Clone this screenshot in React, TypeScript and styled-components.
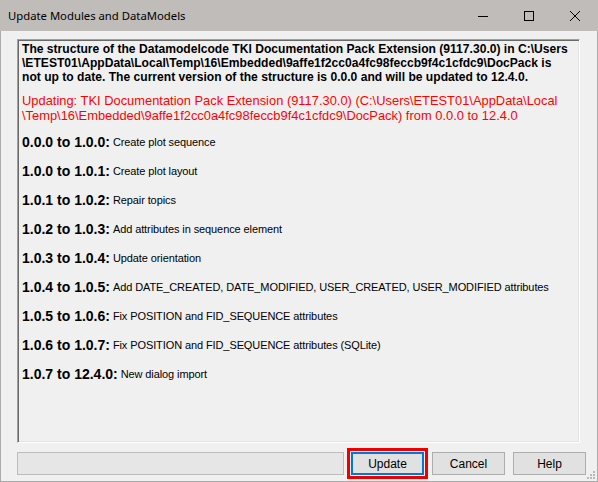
import React from "react";
import styled, { createGlobalStyle } from "styled-components";

const Global = createGlobalStyle`
  html, body { margin: 0; padding: 0; background: #f0f0f0; }
  #root { width: 598px; height: 482px; }
`;

const Window = styled.div`
  box-sizing: border-box;
  width: 598px;
  height: 482px;
  display: flex;
  flex-direction: column;
  background: #f0f0f0;
  border: 1px solid #aaaaaa;
  border-top: none;
  font-family: "Liberation Sans", Arial, sans-serif;
  color: #000;
  position: relative;
`;

const TitleBar = styled.div`
  height: 31px;
  flex: none;
  display: flex;
  align-items: center;
  background: #bfbcb9;
  margin: 0 -1px;
`;

const Title = styled.div`
  flex: 1;
  padding-left: 8px;
  font-family: "Noto Sans", "Liberation Sans", sans-serif;
  font-size: 11.3px;
  color: #000;
`;

const CtrlButton = styled.div`
  width: 46px;
  height: 31px;
  display: flex;
  align-items: center;
  justify-content: center;
`;

const Body = styled.div`
  flex: 1;
  display: flex;
  flex-direction: column;
  padding: 8px 11px 0 16px;
`;

const Panel = styled.div`
  box-sizing: border-box;
  width: 563px;
  height: 404px;
  flex: none;
  border-top: 1px solid #a0a0a0;
  border-left: 1px solid #a0a0a0;
  border-right: 1px solid #ffffff;
  border-bottom: 1px solid #ffffff;
  box-shadow: inset 1px 1px 0 #696969, inset -1px -1px 0 #e3e3e3;
  padding: 2px 4px 0 4px;
  overflow: hidden;
`;

const Header = styled.div`
  font-weight: bold;
  font-size: 12.1px;
  line-height: 14px;
  white-space: nowrap;
`;

const RedText = styled.div`
  margin-top: 9px;
  color: #ff0000;
  font-size: 12.9px;
  line-height: 15px;
  white-space: nowrap;
`;

const Steps = styled.div`
  margin-top: 4px;
  display: flex;
  flex-direction: column;
`;

const Step = styled.div`
  height: 29px;
  display: flex;
  align-items: center;
  white-space: nowrap;
`;

const Version = styled.span`
  font-weight: bold;
  font-size: 14px;
`;

const Desc = styled.span`
  font-size: 11px;
  letter-spacing: -0.1px;
`;

const ButtonRow = styled.div`
  display: flex;
  align-items: center;
  margin-top: 5px;
  height: 31px;
`;

const Status = styled.div`
  box-sizing: border-box;
  width: 327px;
  height: 23px;
  background: #e6e6e6;
  border: 1px solid #bcbcbc;
`;

const Highlight = styled.div`
  box-sizing: border-box;
  margin-left: 3px;
  padding: 1px;
  border: 3px solid #ee0000;
  background: #f0f0f0;
`;

const Button = styled.div<{ $focused?: boolean }>`
  box-sizing: border-box;
  width: 73px;
  height: 23px;
  display: flex;
  align-items: center;
  justify-content: center;
  background: #e1e1e1;
  border: ${(p) => (p.$focused ? "2px solid #0078d7" : "1px solid #adadad")};
  font-size: 12px;
  color: #000;
  margin-left: ${(p) => (p.$focused ? "0" : "8px")};
  &:nth-child(3) { margin-left: 4px; }
`;

const Grip = styled.svg`
  position: absolute;
  right: 1px;
  bottom: 1px;
`;

const steps: [string, string][] = [
  ["0.0.0 to 1.0.0:", "Create plot sequence"],
  ["1.0.0 to 1.0.1:", "Create plot layout"],
  ["1.0.1 to 1.0.2:", "Repair topics"],
  ["1.0.2 to 1.0.3:", "Add attributes in sequence element"],
  ["1.0.3 to 1.0.4:", "Update orientation"],
  ["1.0.4 to 1.0.5:", "Add DATE_CREATED, DATE_MODIFIED, USER_CREATED, USER_MODIFIED attributes"],
  ["1.0.5 to 1.0.6:", "Fix POSITION and FID_SEQUENCE attributes"],
  ["1.0.6 to 1.0.7:", "Fix POSITION and FID_SEQUENCE attributes (SQLite)"],
  ["1.0.7 to 12.4.0:", "New dialog import"],
];

export default function App() {
  return (
    <>
      <Global />
      <Window>
        <TitleBar>
          <Title>Update Modules and DataModels</Title>
          <CtrlButton>
            <svg width="12" height="12" viewBox="0 0 12 12">
              <line x1="1" y1="6.5" x2="11" y2="6.5" stroke="#000" strokeWidth="1" />
            </svg>
          </CtrlButton>
          <CtrlButton>
            <svg width="12" height="12" viewBox="0 0 12 12">
              <rect x="1.5" y="1.5" width="9" height="9" fill="none" stroke="#000" strokeWidth="1" />
            </svg>
          </CtrlButton>
          <CtrlButton>
            <svg width="12" height="12" viewBox="0 0 12 12">
              <path d="M1 1 L11 11 M11 1 L1 11" stroke="#000" strokeWidth="1" />
            </svg>
          </CtrlButton>
        </TitleBar>
        <Body>
          <Panel>
            <Header>
              The structure of the Datamodelcode TKI Documentation Pack Extension (9117.30.0) in C:\Users
              <br />
              \ETEST01\AppData\Local\Temp\16\Embedded\9affe1f2cc0a4fc98feccb9f4c1cfdc9\DocPack is
              <br />
              not up to date. The current version of the structure is 0.0.0 and will be updated to 12.4.0.
            </Header>
            <RedText>
              Updating: TKI Documentation Pack Extension (9117.30.0) (C:\Users\ETEST01\AppData\Local
              <br />
              \Temp\16\Embedded\9affe1f2cc0a4fc98feccb9f4c1cfdc9\DocPack) from 0.0.0 to 12.4.0
            </RedText>
            <Steps>
              {steps.map(([v, d]) => (
                <Step key={v}>
                  <Version>{v}</Version>
                  <Desc>&nbsp;{d}</Desc>
                </Step>
              ))}
            </Steps>
          </Panel>
          <ButtonRow>
            <Status />
            <Highlight>
              <Button $focused>Update</Button>
            </Highlight>
            <Button>Cancel</Button>
            <Button>Help</Button>
          </ButtonRow>
        </Body>
        <Grip width="10" height="10" viewBox="0 0 10 10">
          {[
            [7, 1], [7, 4], [4, 4], [7, 7], [4, 7], [1, 7],
          ].map(([x, y]) => (
            <rect key={`${x}-${y}`} x={x} y={y} width="2" height="2" fill="#b8b8b8" />
          ))}
        </Grip>
      </Window>
    </>
  );
}
